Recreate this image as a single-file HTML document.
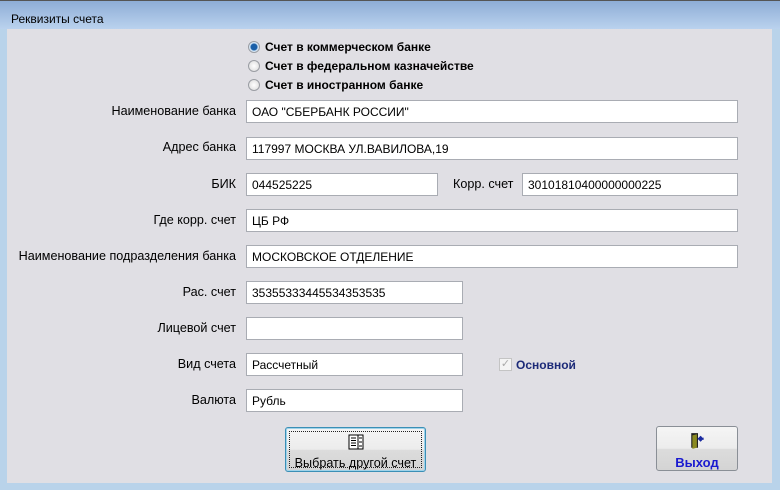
<!DOCTYPE html>
<html><head><meta charset="utf-8"><style>
*{margin:0;padding:0;box-sizing:border-box}
body{width:780px;height:490px;overflow:hidden;background:#b9d3ea;font-family:"Liberation Sans",Arial,sans-serif;font-size:12px;color:#000;position:relative}
.title{position:absolute;left:0;top:0;width:780px;height:29px;background:linear-gradient(#8eadd6,#bad2ee);border-top:1px solid #555}
.title span{position:absolute;left:11px;top:11px;font-size:12px}
.content{position:absolute;left:7px;top:29px;width:765px;height:454px;background:#e0dfe4}
.lbl{position:absolute;text-align:right;width:236px;left:0;font-size:12.6px}
.fld{position:absolute;left:246px;height:23px;background:#fff;border:1px solid #a9acb3;padding:4px 0 0 5px;white-space:nowrap}
.abs{position:absolute}
.rad{position:absolute;left:248px;width:12px;height:12px;border-radius:50%;border:1px solid #9a9da3;background:radial-gradient(#fff,#d8d8d8)}
.rt{position:absolute;left:265px;font-weight:bold}
.btn{position:absolute;border:1px solid #8a8f96;border-radius:3px;background:linear-gradient(#f5f5f5 0,#ececec 50%,#dcdcdc 51%,#d4d4d4 100%);text-align:center}
</style></head><body>
<div class="title"><span>Реквизиты счета</span></div>
<div class="content"></div>
<div class="rad" style="top:41px;background:radial-gradient(#1a5fa8 0 3px,#cfe3f5 4px,#fff)"></div>
<div class="rt" style="top:40px">Счет в коммерческом банке</div>
<div class="rad" style="top:60px"></div>
<div class="rt" style="top:59px">Счет в федеральном казначействе</div>
<div class="rad" style="top:79px"></div>
<div class="rt" style="top:78px">Счет в иностранном банке</div>

<div class="lbl" style="top:104px">Наименование банка</div>
<div class="fld" style="top:100px;width:492px">ОАО "СБЕРБАНК РОССИИ"</div>
<div class="lbl" style="top:140px">Адрес банка</div>
<div class="fld" style="top:137px;width:492px">117997 МОСКВА УЛ.ВАВИЛОВА,19</div>
<div class="lbl" style="top:177px">БИК</div>
<div class="fld" style="top:173px;width:192px">044525225</div>
<div class="abs" style="top:177px;left:453px;font-size:12.6px">Корр. счет</div>
<div class="fld" style="top:173px;left:522px;width:216px">30101810400000000225</div>
<div class="lbl" style="top:213px">Где корр. счет</div>
<div class="fld" style="top:209px;width:492px">ЦБ РФ</div>
<div class="lbl" style="top:249px">Наименование подразделения банка</div>
<div class="fld" style="top:245px;width:492px">МОСКОВСКОЕ ОТДЕЛЕНИЕ</div>
<div class="lbl" style="top:285px">Рас. счет</div>
<div class="fld" style="top:281px;width:217px">35355333445534353535</div>
<div class="lbl" style="top:321px">Лицевой счет</div>
<div class="fld" style="top:317px;width:217px"></div>
<div class="lbl" style="top:357px">Вид счета</div>
<div class="fld" style="top:353px;width:217px">Рассчетный</div>
<div class="abs" style="top:358px;left:499px;width:13px;height:13px;border:1px solid #c4c4c4;background:#f4f4f4;color:#aaa;font-size:11px;line-height:11px;text-align:center">✓</div>
<div class="abs" style="top:358px;left:516px;font-weight:bold;color:#1c2a78">Основной</div>
<div class="lbl" style="top:393px">Валюта</div>
<div class="fld" style="top:389px;width:217px">Рубль</div>

<div class="btn" style="left:285px;top:427px;width:141px;height:45px;border:1px solid #3b8fb6;box-shadow:inset 0 0 0 1px #9fd3ea">
<div style="position:absolute;inset:3px;border:1px dotted #222"></div>
<svg width="16" height="16" style="position:absolute;left:62px;top:6px" viewBox="0 0 16 16"><rect x="1" y="1" width="14" height="14" fill="#fff" stroke="#000"/><path d="M3 4h5M3 6.5h5M3 9h5M3 11.5h5M10 1v14M11 4h3M11 8h3M11 12h3" stroke="#000"/></svg>
<div style="position:absolute;left:0;right:0;top:28px;font-size:12.6px">Выбрать другой счет</div></div>

<div class="btn" style="left:656px;top:426px;width:82px;height:45px">
<svg width="18" height="18" style="position:absolute;left:32px;top:5px" viewBox="0 0 16 16"><path d="M2 1h6v13H2z" fill="#222"/><path d="M3 3l4-1v12l-4 1z" fill="#8a8a20"/><path d="M9 6h4M11 4l-2 2 2 2" stroke="#1a2aa0" stroke-width="2" fill="none"/></svg>
<div style="position:absolute;left:0;right:0;top:28px;font-weight:bold;color:#1a1ad0;font-size:13px">Выход</div></div>
</body></html>
